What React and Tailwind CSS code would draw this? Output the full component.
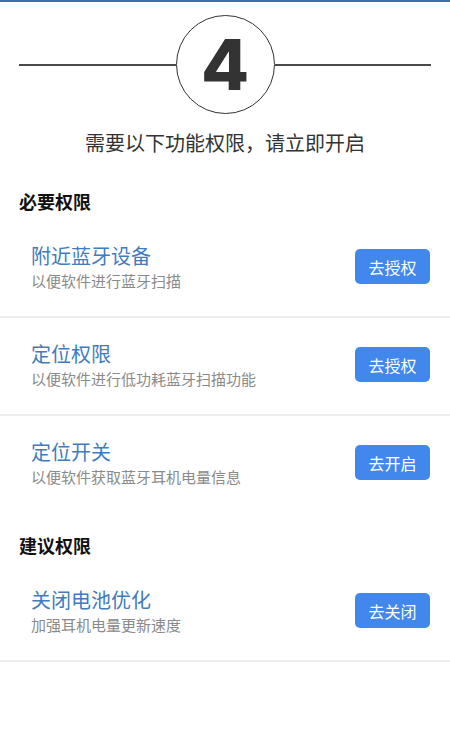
import React from 'react';

const font = { fontFamily: '"Noto Sans CJK SC", "Noto Sans", sans-serif' };

const required = [
  { title: '附近蓝牙设备', desc: '以便软件进行蓝牙扫描', action: '去授权', line: true },
  { title: '定位权限', desc: '以便软件进行低功耗蓝牙扫描功能', action: '去授权', line: true },
  { title: '定位开关', desc: '以便软件获取蓝牙耳机电量信息', action: '去开启', line: false },
];

const suggested = [
  { title: '关闭电池优化', desc: '加强耳机电量更新速度', action: '去关闭', line: true },
];

const PermissionRow = ({ item }) => (
  <div className={item.line ? 'border-b-2 border-[#ededed]' : ''}>
    <div className="flex items-center justify-between pl-[31px] pr-[20px] pt-[22px] pb-[25px]">
      <div className="flex flex-col">
        <span className="text-[20px] leading-[28px] text-[#3f7cc0]">{item.title}</span>
        <span className="mt-[1px] text-[15px] leading-[20px] text-[#8a8a8a]">{item.desc}</span>
      </div>
      <button className="w-[75px] h-[35px] rounded-[5px] bg-[#4288ec] text-white text-[16px]">
        {item.action}
      </button>
    </div>
  </div>
);

const App = () => {
  return (
    <main className="w-[450px] h-[750px] bg-white overflow-hidden" style={font}>
      <div className="h-[2px] bg-[#3a6fb0]" />

      <header className="mt-[13px] flex items-center px-[19px]">
        <div className="flex-1 h-[2px] bg-[#4a4a4a]" />
        <div className="w-[99px] h-[99px] rounded-full border-[1.5px] border-[#333] flex items-center justify-center">
          <span
            className="text-[70px] leading-none font-extrabold text-[#333]"
            style={{ fontFamily: 'Inter, sans-serif' }}
          >
            4
          </span>
        </div>
        <div className="flex-1 h-[2px] bg-[#4a4a4a]" />
      </header>

      <p className="mt-[15px] text-center text-[20px] leading-[28px] text-[#333]">
        需要以下功能权限，请立即开启
      </p>

      <h2 className="mt-[31px] mb-[6px] pl-[19px] text-[18px] leading-[26px] font-bold text-[#111]">必要权限</h2>
      {required.map((item) => (
        <PermissionRow key={item.title} item={item} />
      ))}

      <h2 className="mt-[20px] mb-[6px] pl-[19px] text-[18px] leading-[26px] font-bold text-[#111]">建议权限</h2>
      {suggested.map((item) => (
        <PermissionRow key={item.title} item={item} />
      ))}
    </main>
  );
};

export default App;
